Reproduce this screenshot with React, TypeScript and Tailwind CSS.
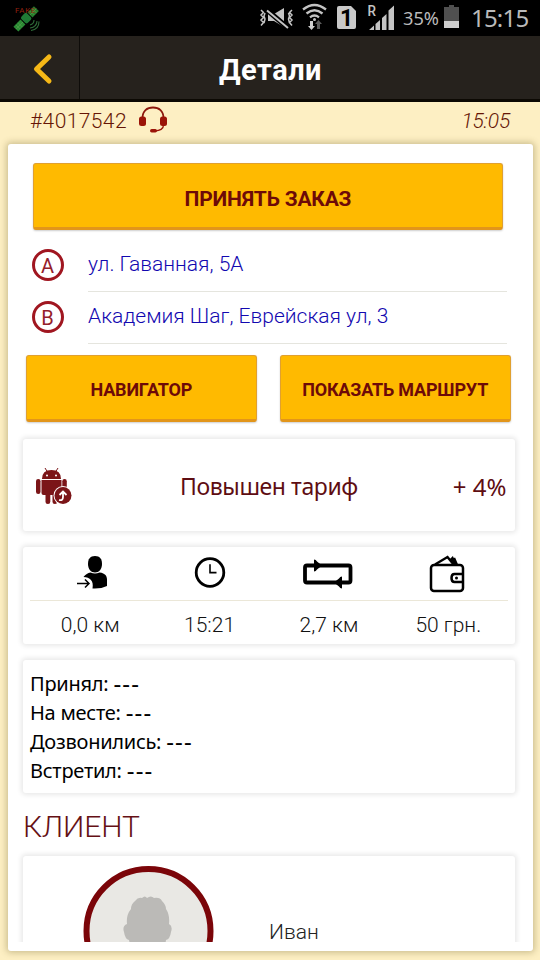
import React from "react";

const light = "font-['Roboto','Noto_Sans',sans-serif] font-light";
const panel = "mr-[18.5px] ml-[15.5px] rounded-[3px] bg-white shadow-[0_0_5px_2px_rgba(0,0,0,0.09)]";
const button =
  "flex items-center justify-center rounded-[3px] border border-[#e0a030] border-b-[3px] border-b-[#e2951a] bg-[#ffba00] font-bold text-[#6d0a08] shadow-[0_1px_2px_rgba(0,0,0,0.2)]";

function Satellite() {
  return (
    <svg width="28" height="30" viewBox="0 0 28 30" className="mt-[3px] ml-[13px]">
      <g transform="translate(-.5 .5) rotate(-45 14 15)">
        <rect x="-1" y="11.500" width="10" height="7" fill="#2b8a35" />
        <rect x="10" y="10" width="8" height="9" rx="2" fill="#1f7a35" />
        <rect x="19" y="11.500" width="9" height="7" fill="#267a2a" />
        <path d="M2 12v6M5 12v6M22 12v6M25 12v6M-1 15h10M19 15h9" stroke="#4f9e48" strokeWidth=".7" />
      </g>
      <text x="2" y="10" fontSize="8" letterSpacing="0.6" fill="#94200f" fontFamily="Roboto, sans-serif">FAKE</text>
      <path d="M17 22q4-1 4-5M17 25q7-1 7-7M18 27.500q8-1 8-9" fill="none" stroke="#2f6b38" strokeWidth="1.100" />
    </svg>
  );
}

function StatusIcons() {
  return (
    <svg width="205" height="36" viewBox="258 0 205 36" fill="none">
      <g stroke="#c4c4c4" strokeWidth="1.500">
        <path d="M261 10l2.500 2.500-2.500 2.500 2.500 2.500-2.500 2.500 2.500 2.500-2.500 3M265 13l-1 3 1 3-1 4" />
        <path d="M292 10l-2.500 2.500 2.500 2.500-2.500 2.500 2.500 2.500-2.500 2.500 2.500 3M288.500 13l1 3-1 3 1 4" />
      </g>
      <path d="M268 14h6l10-6v19l-10-6h-6z" fill="#c4c4c4" />
      <path d="M267 10l21 18" stroke="#000" strokeWidth="5" />
      <path d="M267 10.500l21 17.500" stroke="#c4c4c4" strokeWidth="2" />
      <g stroke="#c4c4c4" strokeWidth="2.300">
        <path d="M303 9.500q11.500-9 23 0M306.500 13.500q8-6.500 16 0M310 17.300q4.500-3.500 9 0" />
      </g>
      <circle cx="314.500" cy="19.500" r="1.500" fill="#c4c4c4" />
      <path d="M310 21h3v5h2l-3.500 4-3.500-4h2z" fill="#d0d0d0" />
      <path d="M317 29h3v-5h2l-3.500-4-3.500 4h2z" fill="#5c5c5c" />
      <path d="M337 8q0-2 2-2h12l5 5v16q0 2-2 2h-15q-2 0-2-2z" fill="#c9c9c9" />
      <text x="340" y="25.500" fontSize="23" fontWeight="700" fill="#000" fontFamily="Roboto, sans-serif">1</text>
      <text x="367.500" y="15.500" fontSize="14.500" fontWeight="500" textLength="8.500" lengthAdjust="spacingAndGlyphs" fill="#c4c4c4" fontFamily="Roboto, sans-serif">R</text>
      <path d="M369 30l5-4.500v4.500zM375.500 24l4.500-4v10h-4.500zM382 18l4.500-4v16h-4.500zM388.500 10.500l5.500-5v24.500h-5.500z" fill="#c4c4c4" />
      <text x="403" y="25" fontSize="18" textLength="36" lengthAdjust="spacingAndGlyphs" fill="#bababa" fontFamily="'Noto Sans', sans-serif">35%</text>
      <path d="M444 7h5V5h5v2h5v14h-15z" fill="#505050" />
      <path d="M444 21h15v7h-15z" fill="#cecece" />
    </svg>
  );
}

function Headset() {
  return (
    <svg width="30" height="28" viewBox="0 0 30 28" fill="none" className="ml-[11px] -mt-[6px]">
      <path d="M4.500 12C4.500 5 9 1.500 15 1.500S25.500 5 25.500 12" stroke="#8c170c" strokeWidth="1.800" />
      <rect x="1" y="10.500" width="7" height="9.500" rx="2.500" fill="#9b1408" />
      <rect x="22" y="10.500" width="7" height="9.500" rx="2.500" fill="#9b1408" />
      <path d="M25.500 19q0 5.500-9 6" stroke="#9b1408" strokeWidth="1.300" />
      <rect x="12" y="23" width="7" height="3.500" rx="1.700" fill="#9b1408" />
    </svg>
  );
}

function AndroidIcon() {
  return (
    <svg width="38" height="38" viewBox="0 0 38 38" fill="#7b1518" className="ml-[12px] shrink-0">
      <path d="M10 2l2.500 4M23 2l-2.500 4" stroke="#7b1518" strokeWidth="1" />
      <path d="M7 13q0-9 9.500-9T26 13zM6.500 14h20v13q0 2-2 2h-16q-2 0-2-2z" />
      <rect x="1" y="13" width="4.500" height="15" rx="2.200" />
      <rect x="27.300" y="13" width="4.500" height="12" rx="2.200" />
      <rect x="10.500" y="25" width="4.800" height="13" rx="2.300" />
      <rect x="17.500" y="25" width="4.800" height="13" rx="2.300" />
      <circle cx="12" cy="9.500" r="1" fill="#fff" />
      <circle cx="21" cy="9.500" r="1" fill="#fff" />
      <circle cx="28" cy="29.500" r="9.500" fill="#fff" />
      <circle cx="28" cy="29.500" r="8.500" />
      <path d="M24 34q4 1 4-3v-5m-3.500 3l3.500-3.500 3.500 3.500" stroke="#fff" strokeWidth="1.800" fill="none" />
    </svg>
  );
}

function Stop({ letter, text }: { letter: string; text: string }) {
  return (
    <div className="flex h-[52px] pl-[24px]">
      <div className="mt-[9px] flex size-[32px] items-center justify-center rounded-full border-[3px] border-[#a01620] font-['Roboto',sans-serif] text-[20px] leading-none text-[#95202a]">
        <span className="-mb-px">{letter}</span>
      </div>
      <div className={`${light} ml-[24.5px] w-[419px] border-b border-[#e5e5de] text-[21px] leading-[48px] text-[#1208b0]`}>
        {text}
      </div>
    </div>
  );
}

function PersonIcon() {
  return (
    <svg width="34" height="38" viewBox="0 0 34 38" className="ml-[6px] -mt-[2px]">
      <path d="M19 2c5 0 7 3 7 8s-3 8.500-7 8.500S12 15 12 10s2-8 7-8z" />
      <path d="M7.500 23q3-4 7-4.500 4.500 2 9 0c6 .5 7.500 4 7.500 7V32q-6 3-14.500 2.500C18 27 14 23 7.500 23z" />
      <path d="M1 29.500h12M9 25.500l4 4-4 4" fill="none" stroke="#000" strokeWidth="1.500" />
    </svg>
  );
}

function ClockIcon() {
  return (
    <svg width="34" height="38" viewBox="0 0 34 38" fill="none" stroke="#000" className="ml-[2px] -mt-[2px]">
      <circle cx="17" cy="18.500" r="13.800" strokeWidth="2.800" />
      <path d="M17 10.300v8.300h6.500" strokeWidth="1.600" />
    </svg>
  );
}

function LoopIcon() {
  return (
    <svg width="50" height="38" viewBox="0 0 50 38">
      <rect x="2" y="10.500" width="45.500" height="17" rx="2" fill="none" stroke="#000" strokeWidth="3.800" />
      <path d="M11 4.500q2 0 3 2l5 4-5 4q-1 2-3 2zM39 21.500q-2 0-3 2l-5 4 5 4q1 2 3 2z" />
    </svg>
  );
}

function WalletIcon() {
  return (
    <svg width="36" height="40" viewBox="0 0 36 40" fill="none" stroke="#000" strokeWidth="2.500" className="-ml-[2px]">
      <rect x="2" y="11" width="32" height="26" rx="3" />
      <path d="M6 10.500L18.500 3l6.500 8M21 6.500l2.500-2.500 3 7M25 4l3 7" strokeWidth="2.400" />
      <path d="M34 20h-8.500q-3 0-3 4t3 4H34" />
      <circle cx="27.500" cy="24" r="1.500" fill="#000" stroke="none" />
    </svg>
  );
}

const stats = [
  { icon: <PersonIcon />, value: "0,0 км" },
  { icon: <ClockIcon />, value: "15:21" },
  { icon: <LoopIcon />, value: "2,7 км" },
  { icon: <WalletIcon />, value: "50 грн." },
];

const events = ["Принял:", "На месте:", "Дозвонились:", "Встретил:"];

export default function App() {
  return (
    <div className="flex h-[960px] w-[540px] flex-col overflow-hidden bg-[#fdefc3] font-['Roboto',sans-serif]">
      <div className="flex h-[36px] shrink-0 bg-black">
        <Satellite />
        <div className="ml-auto flex">
          <StatusIcons />
          <div className="w-[77px] pl-[8px] font-['Noto_Sans',sans-serif] text-[24px] leading-[36px] tracking-[-0.8px] text-[#bababa]">15:15</div>
        </div>
      </div>
      <div className="flex h-[66px] shrink-0 border-b-[3px] border-[#0c0903] bg-[#26221d]">
        <div className="flex w-[80px] items-center border-r border-[#0e0c09] pl-[31px]">
          <svg width="24" height="34" viewBox="0 0 24 34" fill="none" className="mt-[2px]">
            <path d="M18 5L5.500 17 18 29" stroke="#f5b817" strokeWidth="5" strokeLinecap="round" strokeLinejoin="round" />
          </svg>
        </div>
        <div className="flex-1 pr-[79px] text-center text-[29px] font-bold leading-[68px] tracking-[0.5px] text-white">Детали</div>
      </div>

      <div className={`${light} flex h-[42px] shrink-0 items-center pr-[30px] pl-[30px] text-[21px] text-[#651505]`}>
        <span className="-mt-[3px] tracking-[0.4px]">#4017542</span>
        <Headset />
        <span className="-mt-[3px] ml-auto italic tracking-[-0.2px]">15:05</span>
      </div>

      <div className="mr-[7px] ml-[7.5px] h-[807px] shrink-0 rounded-[3px] bg-white pt-[19px] shadow-[0_0_6px_2px_rgba(100,85,30,0.3)]">
        <div className={`${button} mr-[30px] ml-[25.5px] h-[67px] pt-[8px] text-[21px] tracking-[-0.2px]`}>ПРИНЯТЬ ЗАКАЗ</div>
        <div className="mt-[10px]">
          <Stop letter="A" text="ул. Гаванная, 5А" />
          <Stop letter="B" text="Академия Шаг, Еврейская ул, 3" />
        </div>
        <div className="mt-[11px] mr-[22.5px] ml-[18.5px] flex gap-[23px]">
          <div className={`${button} h-[67px] flex-1 pt-[4px] text-[18px] tracking-[-0.15px]`}>НАВИГАТОР</div>
          <div className={`${button} h-[67px] flex-1 pt-[4px] text-[18px] tracking-[-0.2px]`}>ПОКАЗАТЬ МАРШРУТ</div>
        </div>

        <div className={`${panel} mt-[17px] flex h-[92px] items-center font-['Noto_Sans',sans-serif] text-[24px] text-[#5e0d12]`}>
          <AndroidIcon />
          <div className="flex-1 pt-[3px] pl-[12px] text-center text-[23px] tracking-[-0.4px]">Повышен тариф</div>
          <div className="mr-[8px] pt-[3px]">+ 4%</div>
        </div>

        <div className={`${panel} mt-[16px] h-[97px] px-[7px]`}>
          <div className="flex h-[54px] border-b border-[#ebe7d8]">
            {stats.map((s) => (
              <div key={s.value} className="flex flex-1 items-center justify-center">{s.icon}</div>
            ))}
          </div>
          <div className={`${light} flex text-[21px] leading-[49px] text-[#111]`}>
            {stats.map((s) => (
              <div key={s.value} className="flex-1 pl-px text-center">{s.value}</div>
            ))}
          </div>
        </div>

        <div className={`${panel} mt-[16px] h-[133px] px-[7px] pt-[9px] font-['Noto_Sans',sans-serif] text-[20px] tracking-[-0.25px] text-black`}>
          {events.map((label) => (
            <div key={label} className="flex h-[29px] items-center">
              <span>{label}</span>
              <span className="-mt-[2px] ml-[5px] text-[24px] leading-none tracking-[1.2px]">---</span>
            </div>
          ))}
        </div>

        <div className={`${light} mt-[16px] h-[40px] pl-[15.5px] text-[30px] leading-[36px] tracking-[-0.1px] text-[#651015]`}>КЛИЕНТ</div>

        <div className="h-[93px] overflow-hidden pt-[7px]">
          <div className={`${panel} flex h-[160px] items-start`}>
            <svg width="132" height="132" viewBox="0 0 132 132" className="mt-[9px] ml-[60px]">
              <circle cx="65.500" cy="66" r="62" fill="#e9e8e4" stroke="#7b0509" strokeWidth="6" />
              <path d="M64 33q4-3 7 0 6-1 8 3 4 4 4 8 4 6 3 15 4 2 2 8-1 7-5 8-3 20-18 20T46 75q-4-1-5-8-2-6 3-8-1-9 4-15 0-5 4-8 3-4 7-3 3-3 5 0z" fill="#bbbab7" />
            </svg>
            <div className={`${light} mt-[66px] ml-[54px] text-[21px] leading-[20px] text-[#222]`}>Иван</div>
          </div>
        </div>
      </div>
    </div>
  );
}
